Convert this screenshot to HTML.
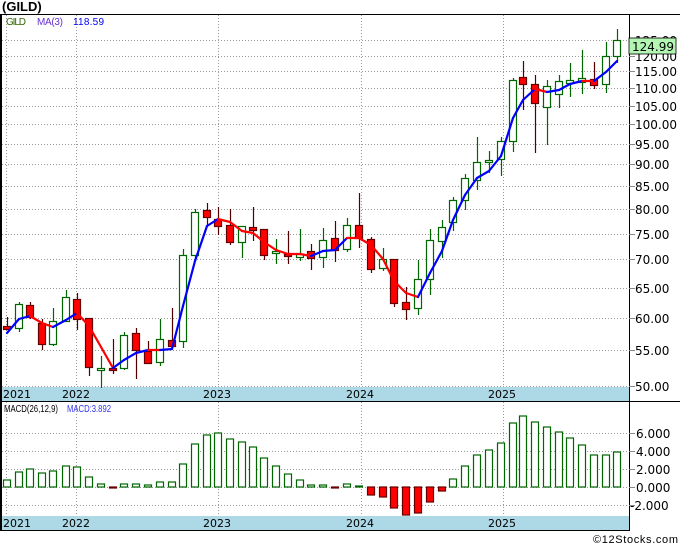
<!DOCTYPE html>
<html><head><meta charset="utf-8"><style>
body{margin:0;background:#fff;width:680px;height:546px;overflow:hidden}
svg{display:block;font-family:"DejaVu Sans","Liberation Sans",sans-serif}
</style></head><body>
<svg id="s" width="680" height="546" xmlns="http://www.w3.org/2000/svg">
<rect width="680" height="546" fill="#fff"/>
<g id="grid" stroke="#999" stroke-dasharray="1,2" stroke-width="1"></g>
<rect x="0" y="387" width="629" height="14" fill="#add8e6"/>
<rect x="0" y="516" width="629" height="14" fill="#add8e6"/>
<g id="candles"></g>
<g id="ma" fill="none" stroke-width="2.2" stroke-linejoin="round"></g>
<g id="macd"></g>
<line x1="0" y1="14.5" x2="680" y2="14.5" stroke="#000"/>
<line x1="0" y1="401.5" x2="680" y2="401.5" stroke="#000"/>
<line x1="0" y1="530.5" x2="630" y2="530.5" stroke="#000"/>
<line x1="629.5" y1="14" x2="629.5" y2="531" stroke="#000"/>
<line x1="1" y1="14" x2="1" y2="531" stroke="#000" stroke-width="2"/>
<g id="ticks" stroke="#888"></g>
<g font-size="12" fill="#000">
<text x="635" y="61">120.00</text><text x="635" y="76">115.00</text><text x="635" y="93">110.00</text>
<text x="635" y="111">105.00</text><text x="635" y="129">100.00</text><text x="635" y="149">95.00</text>
<text x="635" y="169">90.00</text><text x="635" y="191">85.00</text><text x="635" y="214">80.00</text>
<text x="635" y="239">75.00</text><text x="635" y="264">70.00</text><text x="635" y="293">65.00</text>
<text x="635" y="323">60.00</text><text x="635" y="355">55.00</text><text x="635" y="391">50.00</text>
<text x="635" y="45">125.00</text>
<text x="636" y="438">6.000</text><text x="636" y="456">4.000</text><text x="636" y="474">2.000</text>
<text x="636" y="492">0.000</text><text x="630" y="510">-2.000</text>
</g>
<rect x="629" y="38" width="47" height="16" fill="#b3f5b3" stroke="#000" stroke-width="0.8"/>
<text x="632" y="51" font-size="12">124.99</text>
<g font-size="11" fill="#000">
<text x="3" y="398">2021</text><text x="62" y="398">2022</text><text x="203" y="398">2023</text><text x="346" y="398">2024</text><text x="488" y="398">2025</text>
<text x="3" y="527">2021</text><text x="62" y="527">2022</text><text x="203" y="527">2023</text><text x="346" y="527">2024</text><text x="488" y="527">2025</text>
</g>
<text x="2" y="11" font-size="13" font-weight="bold" font-family="Liberation Sans,sans-serif">(GILD)</text>
<g font-family="Liberation Sans,sans-serif">
<text x="6" y="25" font-size="10" fill="#336600" textLength="20">GILD</text>
<text x="37" y="25" font-size="10" fill="#6633cc" textLength="26">MA(3)</text>
<text x="73" y="25" font-size="10" fill="#0000ee" textLength="31">118.59</text>
<text x="4" y="412" font-size="10" fill="#000" textLength="54" lengthAdjust="spacingAndGlyphs">MACD(26,12,9)</text>
<text x="67" y="412" font-size="10" fill="#3333ee" textLength="44" lengthAdjust="spacingAndGlyphs">MACD:3.892</text>
<text x="593" y="543" font-size="11" fill="#000" textLength="85">©12Stocks.com</text>
</g>
</svg>
<script>
var NS="http://www.w3.org/2000/svg";
function el(p,t,a){var e=document.createElementNS(NS,t);for(var k in a)e.setAttribute(k,a[k]);document.getElementById(p).appendChild(e);return e;}
[40,56,71,88,106,124,144,164,186,209,234,259,288,318,350,386].forEach(function(y){el("grid","line",{x1:2,x2:629,y1:y+.5,y2:y+.5});el("ticks","line",{x1:629,x2:635,y1:y+.5,y2:y+.5});});
[433,451,469,487,505].forEach(function(y){el("grid","line",{x1:2,x2:629,y1:y+.5,y2:y+.5});el("ticks","line",{x1:629,x2:635,y1:y+.5,y2:y+.5});});
[6,76,218,361,503].forEach(function(x){el("grid","line",{x1:x+.5,x2:x+.5,y1:15,y2:387});el("grid","line",{x1:x+.5,x2:x+.5,y1:402,y2:516});});
var C=[[7,326,329,317,330,0],[19,304,328,302,332,1],[30,305,317,302,319,0],[42,323,344,319,350,0],[53,321,344,308,346,1],[66,297,321,290,322,1],[77,299,319,293,330,0],[89,318,367,318,376,0],[101,368,370,356,388,1],[113,368,370,339,374,0],[124,335,368,332,370,1],[136,333,350,328,379,0],[148,351,363,341,364,0],[160,339,362,319,366,1],[172,340,346,308,346,0],[183,255,341,249,348,1],[195,212,255,209,261,1],[207,210,217,203,225,0],[218,219,226,207,235,0],[230,225,242,209,245,0],[242,226,242,226,258,1],[253,227,230,207,241,0],[264,229,255,229,260,0],[276,251,253,239,264,1],[288,254,256,231,264,0],[300,254,257,229,261,1],[311,251,258,244,270,0],[323,240,257,228,268,1],[335,238,250,221,262,0],[347,225,249,218,252,1],[359,225,238,193,248,0],[371,239,269,237,273,0],[383,259,268,248,271,1],[394,259,303,259,307,0],[406,302,309,287,320,0],[418,279,308,260,315,1],[430,240,279,229,295,1],[442,227,241,220,258,1],[453,200,222,197,231,1],[465,178,200,174,210,1],[477,162,180,137,190,1],[489,160,162,151,173,1],[501,141,159,137,176,1],[513,80,141,78,152,1],[523,77,84,61,110,0],[535,84,103,75,153,0],[547,86,107,80,145,1],[559,81,94,75,108,1],[570,80,83,63,97,1],[582,78,82,50,94,1],[594,79,85,62,89,0],[606,56,84,42,93,1],[617,40,56,29,63,1]];
C.forEach(function(c){var col=c[5]?"#006600":"#550000";
el("candles","line",{x1:c[0]+.5,x2:c[0]+.5,y1:c[3],y2:c[4],stroke:col,"stroke-width":1.2});
el("candles","rect",{x:c[0]-3.5,y:c[1]+.5,width:7,height:Math.max(1,c[2]-c[1]),fill:c[5]?"#fff":"#ff0000",stroke:c[5]?"#006600":"#660000","stroke-width":1.2});});
var M=[[7,333],[19,319],[30,316],[42,323],[53,327],[66,320],[77,313],[89,326],[101,347],[113,368],[124,360],[136,353],[148,350],[160,350],[172,349],[183,306],[195,261],[207,226],[218,219],[230,222],[242,231],[253,233],[264,242],[276,250],[288,254],[300,254],[311,256],[323,251],[335,250],[347,238],[359,238],[371,245],[383,259],[394,281],[406,293],[418,297],[430,273],[442,251],[453,220],[465,195],[477,178],[489,171],[501,156],[513,118],[523,100],[535,89],[547,92],[559,90],[570,84],[582,81],[594,81],[606,72],[617,61]];
for(var i=1;i<M.length;i++){var up=M[i][1]<M[i-1][1];el("ma","line",{x1:M[i-1][0],y1:M[i-1][1],x2:M[i][0],y2:M[i][1],stroke:up?"#0000ff":"#ff0000","stroke-linecap":"round"});}
var H=[480,472,469,473,471,466,467,477,484,488,484,484,485,482,482,464,444,435,433,439,442,447,458,466,474,480,485,485,488,484,486,495,497,508,515,513,502,491,479,466,455,450,443,423,416,422,427,432,438,445,455,455,452];
H.forEach(function(y,i){var x=C[i][0]-3.5;var neg=y>487;
if(neg)el("macd","rect",{x:x,y:487,width:7,height:y-487,fill:"#ff0000",stroke:"#660000","stroke-width":1.2});
else el("macd","rect",{x:x,y:y,width:7,height:Math.max(0.5,487-y),fill:"#fff",stroke:"#006600","stroke-width":1.2});});
</script>
</body></html>
